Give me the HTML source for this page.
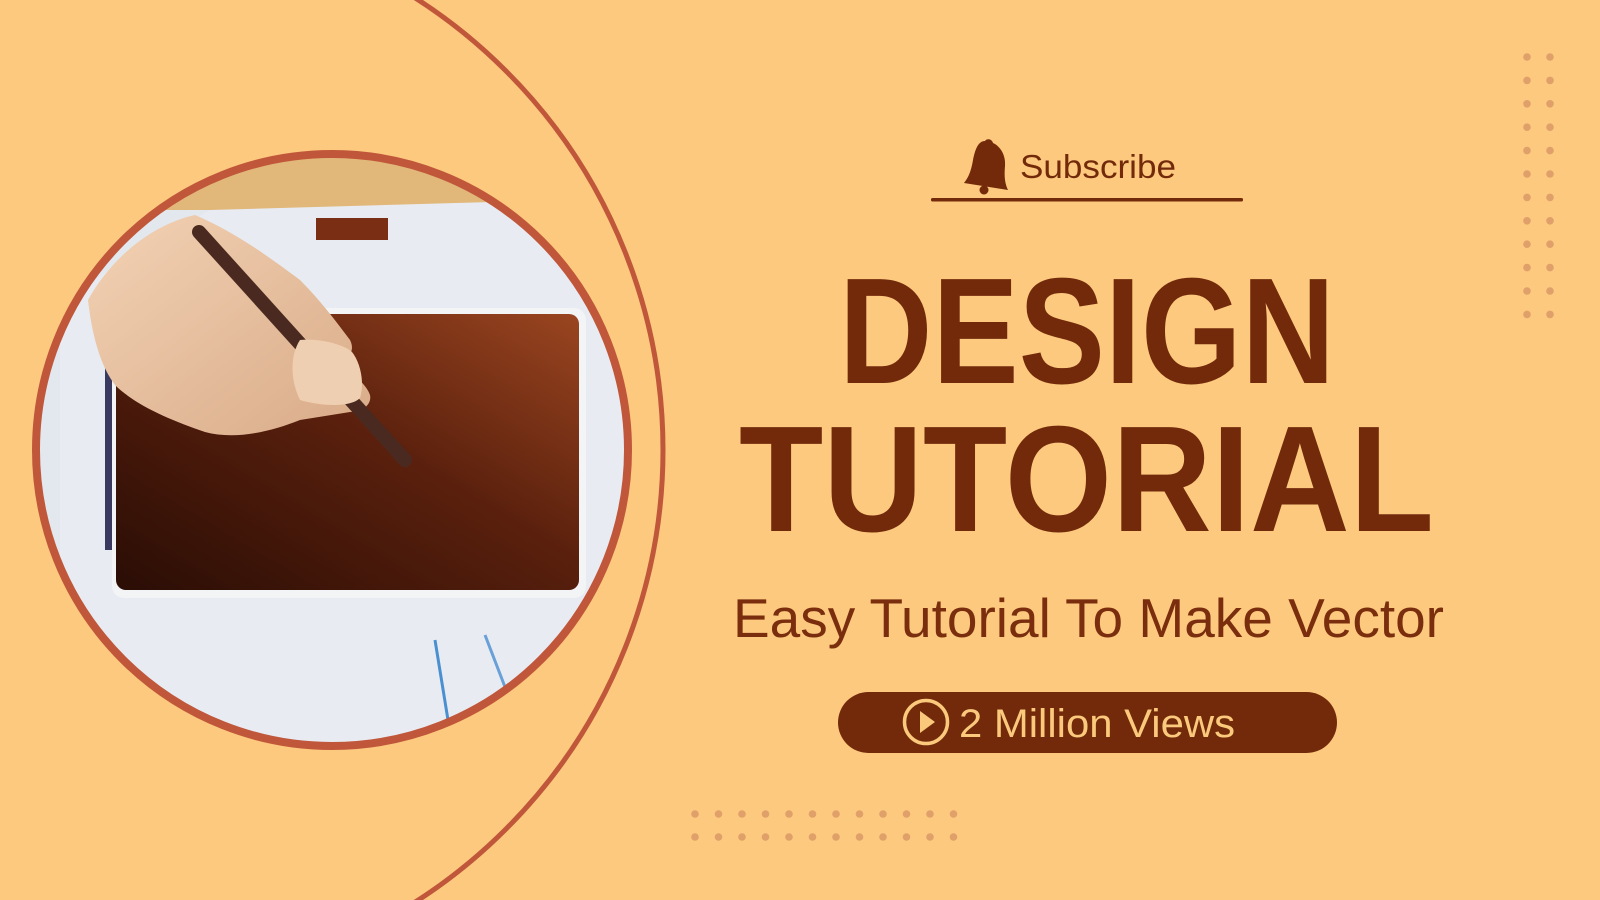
<!DOCTYPE html>
<html><head><meta charset="utf-8"><style>
html,body{margin:0;padding:0;background:#fcc97e;width:1600px;height:900px;overflow:hidden;position:relative;}
svg{display:block;position:absolute;left:0;top:0;}
</style></head><body><svg width="1600" height="900" viewBox="0 0 1600 900" xmlns="http://www.w3.org/2000/svg" overflow="hidden">
<defs>
<clipPath id="cc"><circle cx="332" cy="450" r="293"/></clipPath>
<clipPath id="full"><rect width="1600" height="900"/></clipPath>
<linearGradient id="tab" x1="0" y1="1" x2="1" y2="0">
<stop offset="0" stop-color="#2a0d05"/><stop offset="0.55" stop-color="#5a200d"/><stop offset="1" stop-color="#9a4520"/>
</linearGradient>
<linearGradient id="skin" x1="0" y1="0" x2="1" y2="1">
<stop offset="0" stop-color="#f2d2b4"/><stop offset="1" stop-color="#d9ab88"/>
</linearGradient>
</defs>
<g clip-path="url(#full)">
<rect width="1600" height="900" fill="#fcc97e"/>
<circle cx="127" cy="450" r="536" fill="none" stroke="#c0573a" stroke-width="5"/>
<g clip-path="url(#cc)">
<rect x="0" y="140" width="700" height="620" fill="#e3e7ee"/>
<rect x="0" y="140" width="700" height="70" fill="#e2b77a"/>
<polygon points="210,210 560,200 640,260 640,760 60,760 60,300" fill="#e8ecf2"/>
<rect x="316" y="218" width="72" height="22" fill="#7a2e14"/>
<rect x="105" y="330" width="10" height="220" fill="#3a3a60"/>
<rect x="112" y="308" width="474" height="290" rx="12" fill="#f2f4f6"/>
<rect x="116" y="314" width="463" height="276" rx="10" fill="url(#tab)"/>
<line x1="435" y1="640" x2="448" y2="720" stroke="#4a90d0" stroke-width="3"/>
<line x1="485" y1="635" x2="510" y2="700" stroke="#6aa0d8" stroke-width="3"/>
<path d="M88,300 C110,260 150,225 195,215 C230,230 260,250 300,280 C320,300 335,320 350,340 C355,350 350,358 340,358 L325,350 C340,365 365,380 370,395 C372,405 362,412 350,412 L300,420 C270,432 235,440 205,432 C170,420 135,405 115,385 C100,365 92,335 88,300 Z" fill="url(#skin)"/>
<line x1="199" y1="232" x2="405" y2="460" stroke="#4a2a20" stroke-width="14" stroke-linecap="round"/>
<path d="M300,340 C320,338 345,345 352,352 C360,362 365,382 360,398 C350,408 320,406 300,400 C290,380 290,355 300,340 Z" fill="#efcfb1"/>
</g>
<circle cx="332" cy="450" r="296" fill="none" stroke="#c0573a" stroke-width="8"/>
<g fill="#e0a06a">
<g id="col">
<circle cx="1527" cy="57" r="3.8"/><circle cx="1527" cy="80.4" r="3.8"/><circle cx="1527" cy="103.8" r="3.8"/><circle cx="1527" cy="127.2" r="3.8"/><circle cx="1527" cy="150.6" r="3.8"/><circle cx="1527" cy="174" r="3.8"/><circle cx="1527" cy="197.4" r="3.8"/><circle cx="1527" cy="220.8" r="3.8"/><circle cx="1527" cy="244.2" r="3.8"/><circle cx="1527" cy="267.6" r="3.8"/><circle cx="1527" cy="291" r="3.8"/><circle cx="1527" cy="314.4" r="3.8"/>
</g>
<use href="#col" x="23"/>
<g id="row">
<circle cx="695" cy="814" r="3.8"/><circle cx="718.5" cy="814" r="3.8"/><circle cx="742" cy="814" r="3.8"/><circle cx="765.5" cy="814" r="3.8"/><circle cx="789" cy="814" r="3.8"/><circle cx="812.5" cy="814" r="3.8"/><circle cx="836" cy="814" r="3.8"/><circle cx="859.5" cy="814" r="3.8"/><circle cx="883" cy="814" r="3.8"/><circle cx="906.5" cy="814" r="3.8"/><circle cx="930" cy="814" r="3.8"/><circle cx="953.5" cy="814" r="3.8"/>
</g>
<use href="#row" y="23"/>
</g>
<g fill="#732a0b">
<path d="M985,141 C978,141 975,150 973,160 C971,172 968,178 964,183 L1008,190 C1005,184 1004,177 1005,166 C1006,155 1000,146 993,143 C992,139 987,138 985,141 Z"/>
<circle cx="984" cy="190" r="4.5"/>
</g>
<text x="1020" y="178" font-family="Liberation Sans, sans-serif" font-size="33" fill="#732a0b" textLength="156" lengthAdjust="spacingAndGlyphs">Subscribe</text>
<rect x="931" y="198" width="312" height="3.5" rx="1.5" fill="#732a0b"/>
<g font-family="Liberation Sans, sans-serif" font-weight="bold" fill="#732a0b">
<text x="839" y="383" font-size="151" textLength="496" lengthAdjust="spacingAndGlyphs">DESIGN</text>
<text x="739" y="531" font-size="151" textLength="695" lengthAdjust="spacingAndGlyphs">TUTORIAL</text>
</g>
<text x="733" y="637" font-family="Liberation Sans, sans-serif" font-size="55" fill="#7a2e0e" textLength="711" lengthAdjust="spacingAndGlyphs">Easy Tutorial To Make Vector</text>
<rect x="838" y="692" width="499" height="61" rx="30.5" fill="#732a0b"/>
<circle cx="926" cy="722" r="21.5" fill="none" stroke="#fbc97c" stroke-width="3.5"/>
<path d="M920,711 L935,722 L920,733 Z" fill="#fbc97c"/>
<text x="959" y="737" font-family="Liberation Sans, sans-serif" font-size="40" fill="#fbc97c" textLength="276" lengthAdjust="spacingAndGlyphs">2 Million Views</text>
</g>
</svg></body></html>
